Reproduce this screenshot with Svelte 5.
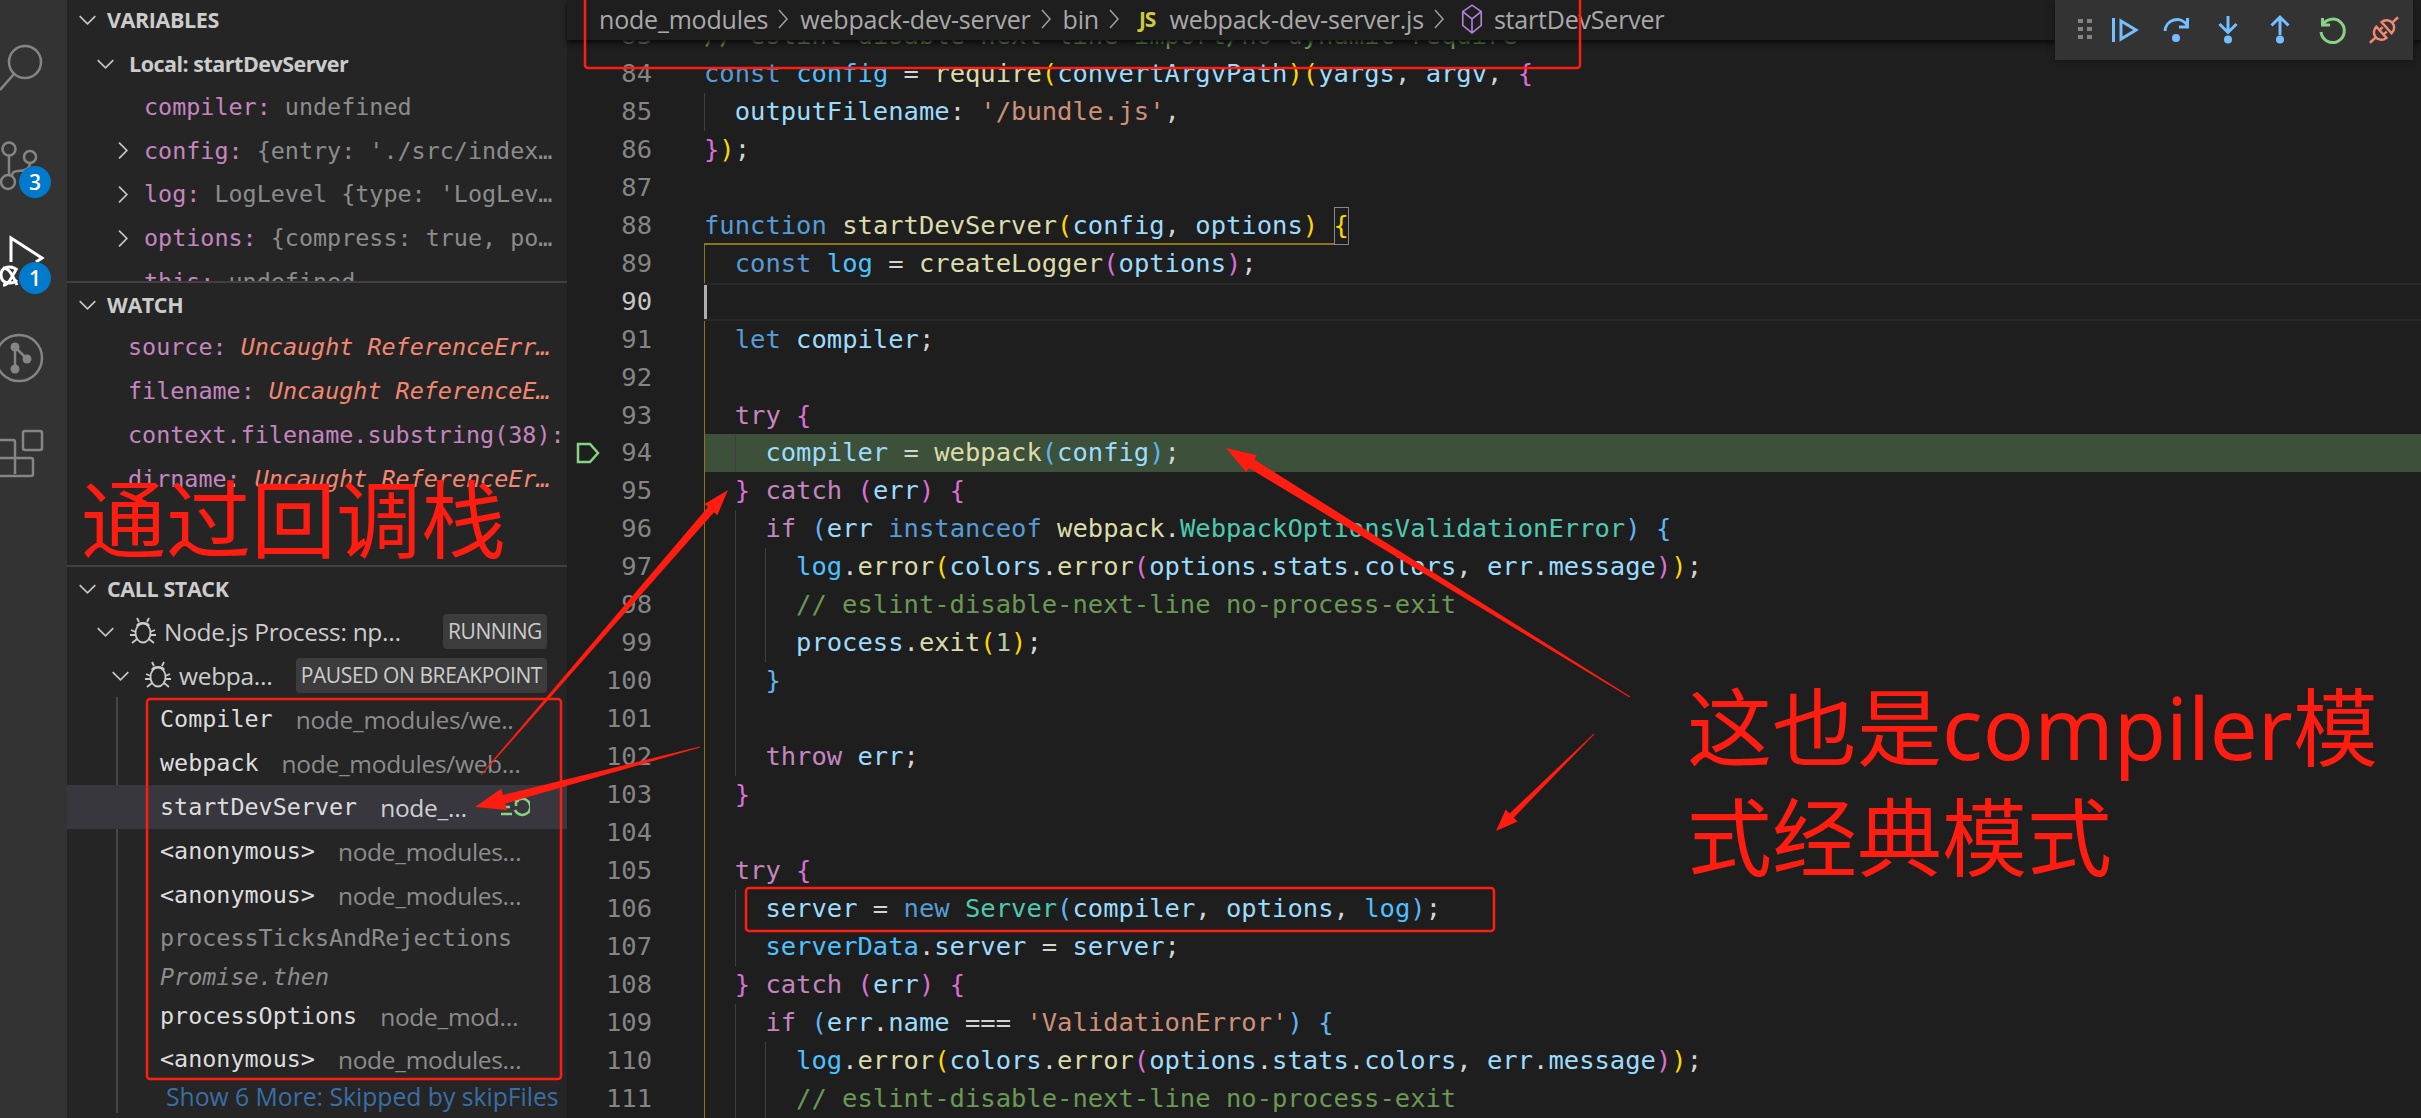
<script>
  // colour classes: k keyword, c control, v variable, o const, f function, s string,
  // t type, m comment, n number, p plain, y/r/b bracket levels
  const lines = [
    { n: 83, g: 0, t: [['m', '// eslint-disable-next-line import/no-dynamic-require']] },
    { n: 84, g: 0, t: [['k', 'const '], ['o', 'config'], ['p', ' = '], ['f', 'require'], ['y', '('], ['v', 'convertArgvPath'], ['y', ')('], ['v', 'yargs'], ['p', ', '], ['v', 'argv'], ['p', ', '], ['r', '{']] },
    { n: 85, g: 1, t: [['v', 'outputFilename'], ['p', ': '], ['s', "'/bundle.js'"], ['p', ',']] },
    { n: 86, g: 0, t: [['r', '}'], ['y', ')'], ['p', ';']] },
    { n: 87, g: 0, t: [] },
    { n: 88, g: 0, t: [['k', 'function '], ['f', 'startDevServer'], ['y', '('], ['v', 'config'], ['p', ', '], ['v', 'options'], ['y', ')'], ['p', ' '], ['y box', '{']], rule: true },
    { n: 89, g: 1, t: [['k', 'const '], ['o', 'log'], ['p', ' = '], ['f', 'createLogger'], ['r', '('], ['v', 'options'], ['r', ')'], ['p', ';']] },
    { n: 90, g: 1, t: [], active: true },
    { n: 91, g: 1, t: [['k', 'let '], ['v', 'compiler'], ['p', ';']] },
    { n: 92, g: 1, t: [] },
    { n: 93, g: 1, t: [['c', 'try '], ['r', '{']] },
    { n: 94, g: 2, t: [['v', 'compiler'], ['p', ' = '], ['f', 'webpack'], ['b', '('], ['v', 'config'], ['b', ')'], ['p', ';']], paused: true },
    { n: 95, g: 1, t: [['r', '}'], ['p', ' '], ['c', 'catch '], ['r', '('], ['v', 'err'], ['r', ')'], ['p', ' '], ['r', '{']] },
    { n: 96, g: 2, t: [['c', 'if '], ['b', '('], ['v', 'err '], ['k', 'instanceof '], ['f', 'webpack'], ['p', '.'], ['t', 'WebpackOptionsValidationError'], ['b', ')'], ['p', ' '], ['b', '{']] },
    { n: 97, g: 3, t: [['o', 'log'], ['p', '.'], ['f', 'error'], ['y', '('], ['v', 'colors'], ['p', '.'], ['f', 'error'], ['r', '('], ['v', 'options'], ['p', '.'], ['v', 'stats'], ['p', '.'], ['v', 'colors'], ['p', ', '], ['v', 'err'], ['p', '.'], ['v', 'message'], ['r', ')'], ['y', ')'], ['p', ';']] },
    { n: 98, g: 3, t: [['m', '// eslint-disable-next-line no-process-exit']] },
    { n: 99, g: 3, t: [['v', 'process'], ['p', '.'], ['f', 'exit'], ['y', '('], ['n', '1'], ['y', ')'], ['p', ';']] },
    { n: 100, g: 2, t: [['b', '}']] },
    { n: 101, g: 2, t: [] },
    { n: 102, g: 2, t: [['c', 'throw '], ['v', 'err'], ['p', ';']] },
    { n: 103, g: 1, t: [['r', '}']] },
    { n: 104, g: 1, t: [] },
    { n: 105, g: 1, t: [['c', 'try '], ['r', '{']] },
    { n: 106, g: 2, t: [['v', 'server'], ['p', ' = '], ['k', 'new '], ['t', 'Server'], ['b', '('], ['v', 'compiler'], ['p', ', '], ['v', 'options'], ['p', ', '], ['o', 'log'], ['b', ')'], ['p', ';']] },
    { n: 107, g: 2, t: [['o', 'serverData'], ['p', '.'], ['v', 'server'], ['p', ' = '], ['v', 'server'], ['p', ';']] },
    { n: 108, g: 1, t: [['r', '}'], ['p', ' '], ['c', 'catch '], ['r', '('], ['v', 'err'], ['r', ')'], ['p', ' '], ['r', '{']] },
    { n: 109, g: 2, t: [['c', 'if '], ['b', '('], ['v', 'err'], ['p', '.'], ['v', 'name'], ['p', ' === '], ['s', "'ValidationError'"], ['b', ')'], ['p', ' '], ['b', '{']] },
    { n: 110, g: 3, t: [['o', 'log'], ['p', '.'], ['f', 'error'], ['y', '('], ['v', 'colors'], ['p', '.'], ['f', 'error'], ['r', '('], ['v', 'options'], ['p', '.'], ['v', 'stats'], ['p', '.'], ['v', 'colors'], ['p', ', '], ['v', 'err'], ['p', '.'], ['v', 'message'], ['r', ')'], ['y', ')'], ['p', ';']] },
    { n: 111, g: 3, t: [['m', '// eslint-disable-next-line no-process-exit']] }
  ];

  const variables = [
    { name: 'compiler', value: 'undefined' },
    { name: 'config', value: "{entry: './src/index…", more: true },
    { name: 'log', value: "LogLevel {type: 'LogLev…", more: true },
    { name: 'options', value: '{compress: true, po…', more: true },
    { name: 'this', value: 'undefined' }
  ];

  const watches = [
    { name: 'source', value: 'Uncaught ReferenceErr…' },
    { name: 'filename', value: 'Uncaught ReferenceE…' },
    { name: 'context.filename.substring(38)', value: '' },
    { name: 'dirname', value: 'Uncaught ReferenceEr…' }
  ];

  const frames = [
    { name: 'Compiler', file: 'node_modules/we..' },
    { name: 'webpack', file: 'node_modules/web…' },
    { name: 'startDevServer', file: 'node_…', current: true },
    { name: '<anonymous>', file: 'node_modules…' },
    { name: '<anonymous>', file: 'node_modules…' },
    { name: 'processTicksAndRejections', file: '', dim: true, tall: 42 },
    { name: 'Promise.then', file: '', label: true },
    { name: 'processOptions', file: 'node_mod…', tall: 42 },
    { name: '<anonymous>', file: 'node_modules…' }
  ];

  // tapered annotation arrow: thin tail, wider neck, barbed head
  function arrow(x1, y1, x2, y2, tail, neck, head, len) {
    const d = Math.hypot(x2 - x1, y2 - y1);
    const ux = (x2 - x1) / d, uy = (y2 - y1) / d;
    const nx = -uy, ny = ux;
    const bx = x2 - ux * len, by = y2 - uy * len;
    const pt = (x, y, w) => `${x + nx * w},${y + ny * w}`;
    return [
      pt(x1, y1, tail / 2), pt(bx, by, neck / 2), pt(bx, by, head / 2), `${x2},${y2}`,
      pt(bx, by, -head / 2), pt(bx, by, -neck / 2), pt(x1, y1, -tail / 2)
    ].join(' ');
  }

  const arrows = [
    arrow(481, 775, 728, 490, 1, 8, 17, 26),
    arrow(700, 747, 475, 807, 1, 9, 22, 30),
    arrow(1630, 697, 1226, 448, 1, 10, 20, 30),
    arrow(1594, 734, 1496, 831, 1, 6, 17, 22)
  ];
</script>

{#snippet chevron(open)}
  <svg class="chev" viewBox="0 0 22 22">
    {#if open}
      <path d="M2 7l9 9 9-9" />
    {:else}
      <path d="M7 2l9 9-9 9" />
    {/if}
  </svg>
{/snippet}

{#snippet bug()}
  <svg class="bug" viewBox="0 0 26 28">
    <ellipse cx="13" cy="16" rx="7.500" ry="9.500" />
    <path d="M7 9c1-4 11-4 12 0M9 5L7 1M17 5l2-4M1 13l5 2M25 13l-5 2M0 18h5M26 18h-5M2 26l5-4M24 26l-5-4" />
  </svg>
{/snippet}

{#snippet sep()}
  <svg class="sep" viewBox="0 0 10 20"><path d="M1 1l8 9-8 9" /></svg>
{/snippet}

<div class="window">
  <aside class="activity">
    <svg class="activity-icons" viewBox="0 0 67 500">
      <g class="stroke">
        <circle cx="25" cy="62" r="16" />
        <path d="M14 74L0 90" />
        <circle cx="9" cy="149" r="6.500" />
        <circle cx="30" cy="157" r="6" />
        <circle cx="8" cy="182" r="7" />
        <path d="M9 156v19M30 163c0 7-6 8-12 8-4 0-6 2-6 5" />
        <circle cx="19" cy="358" r="23" />
        <path d="M15 347l12 12M15 347v22" />
        <rect x="23" y="431" width="19" height="19" rx="2" />
        <path d="M-6 440H13a2 2 0 0 1 2 2V474M-6 458H31a2 2 0 0 1 2 2V474a2 2 0 0 1-2 2H-6" />
      </g>
      <g class="dots">
        <circle cx="15" cy="347" r="4.500" />
        <circle cx="27" cy="359" r="4.500" />
        <circle cx="15" cy="369" r="4.500" />
      </g>
      <g class="stroke white">
        <path d="M11 262V238l31 20-6 4" />
        <path d="M17 270c-5-5-16-4-16 5s11 10 16 5M3 268c6 0 9 6 14 17M3 285c6 0 9-9 14-17" />
      </g>
      <circle class="badge" cx="35" cy="182" r="16" />
      <text class="badge-num" x="35" y="190">3</text>
      <circle class="badge" cx="35" cy="278" r="16" />
      <text class="badge-num" x="35" y="286">1</text>
    </svg>
  </aside>

  <section class="sidebar">
    <div class="pane variables">
      <div class="pane-head">{@render chevron(true)}<span>VARIABLES</span></div>
      <div class="row scope">{@render chevron(true)}<span>Local: startDevServer</span></div>
      {#each variables as v}
        <div class="row var">
          <span class="twist">{#if v.more}{@render chevron(false)}{/if}</span>
          <span><span class="name">{v.name}:</span><span class="value">{' ' + v.value}</span></span>
        </div>
      {/each}
    </div>

    <div class="pane watch">
      <div class="pane-head">{@render chevron(true)}<span>WATCH</span></div>
      {#each watches as w}
        <div class="row expr">
          <span><span class="name">{w.name}:</span>{#if w.value}<span class="error">{' ' + w.value}</span>{/if}</span>
        </div>
      {/each}
    </div>

    <div class="pane stack">
      <div class="pane-head">{@render chevron(true)}<span>CALL STACK</span></div>
      <div class="row session">
        {@render chevron(true)}{@render bug()}
        <span class="session-name">Node.js Process: np…</span>
        <span class="state">RUNNING</span>
      </div>
      <div class="row session thread">
        {@render chevron(true)}{@render bug()}
        <span class="session-name">webpa…</span>
        <span class="state">PAUSED ON BREAKPOINT</span>
      </div>
      <div class="frames">
        {#each frames as f}
          <div class="frame" class:current={f.current} class:tall42={f.tall === 42} class:label={f.label}>
            <span class="fn" class:dim={f.dim} class:ital={f.label}>{f.name}</span>
            {#if f.file}<span class="file">{f.file}</span>{/if}
            {#if f.current}
              <svg class="restart-frame" viewBox="0 0 30 22">
                <path d="M1 4h11M1 11h9M1 18h11" />
                <path d="M19 5h-3v5M16 6a8 8 0 1 1-1 8" />
              </svg>
            {/if}
          </div>
        {/each}
        <div class="show-more">Show 6 More: Skipped by skipFiles</div>
      </div>
    </div>
  </section>

  <main class="editor">
    <nav class="crumbs">
      <span>node_modules</span>{@render sep()}
      <span>webpack-dev-server</span>{@render sep()}
      <span>bin</span>{@render sep()}
      <b class="js">JS</b><span>webpack-dev-server.js</span>{@render sep()}
      <svg class="cube" viewBox="0 0 26 34">
        <path d="M13 2l10 7v15L13 32 3 24V9zM3 9l10 8 10-8M13 17v15" />
      </svg>
      <span>startDevServer</span>
    </nav>
    <div class="scroller">
      <div class="code">
        {#each lines as l}
          <div class="line" class:active={l.active}>
            <div class="gutter">
              <span class="glyph">
                {#if l.paused}
                  <svg viewBox="0 0 24 24"><path d="M2 3h12l8 9-8 9H2z" /></svg>
                {/if}
              </span>
              <span class="num">{l.n}</span>
            </div>
            <div class="content" class:paused={l.paused}>{#each { length: l.g } as _, i}<span class="guide" class:gold={i === 0 && l.n > 88}></span>{/each}{#each l.t as tok}<span class="tok {tok[0]}">{tok[1]}</span>{/each}{#if l.rule}<span class="rule"></span>{/if}{#if l.active}<span class="cursor"></span>{/if}</div>
          </div>
        {/each}
      </div>
    </div>
  </main>

  <div class="debug-bar">
    <svg class="grip" viewBox="0 0 14 22"><path d="M0 0h5v4H0zM9 0h5v4H9zM0 8h5v4H0zM9 8h5v4H9zM0 16h5v4H0zM9 16h5v4H9z" /></svg>
    <svg class="tool" viewBox="0 0 32 32"><path d="M5.500 4v24M13 7l15 9-15 9z" /></svg>
    <svg class="tool" viewBox="0 0 32 32"><path d="M5 17A12 12 0 0 1 27 11M27.500 4v9H19" /><circle cx="16" cy="24" r="4" /></svg>
    <svg class="tool" viewBox="0 0 32 32"><path d="M16 2v16M7.500 10l8.500 8.500L24.500 10" /><circle cx="16" cy="25.500" r="4" /></svg>
    <svg class="tool" viewBox="0 0 32 32"><path d="M16 21V4M7.500 11.500L16 3l8.500 8.500" /><circle cx="16" cy="25.500" r="4" /></svg>
    <svg class="tool restart" viewBox="0 0 32 32"><path d="M6.500 4v7H14M6.500 11A11.700 11.700 0 1 1 5 18" /></svg>
    <svg class="tool unplug" viewBox="0 0 32 32">
      <g transform="rotate(-42 16 16)"><path d="M-3 16H5M35 16H27M12.500 8.500A7.500 7.500 0 0 0 12.500 23.500ZM19.500 8.500A7.500 7.500 0 0 1 19.500 23.500ZM12.500 13H17M12.500 19H17" /></g>
    </svg>
  </div>

  <svg class="marks" viewBox="0 0 2421 1118">
    <rect x="585" y="-3" width="995" height="71" rx="3" />
    <rect x="147" y="699" width="414" height="380" rx="3" />
    <rect x="746" y="888" width="748" height="43" rx="3" />
    {#each arrows as points}
      <polygon {points} />
    {/each}
  </svg>

  <div class="note note-left">通过回调栈</div>
  <div class="note note-right">这也是compiler模<br />式经典模式</div>
</div>

<style>
  :global(body) {
    margin: 0;
    background: #1e1e1e;
  }

  .window {
    position: relative;
    display: flex;
    width: 2421px;
    height: 1118px;
    overflow: hidden;
    font-family: "Open Sans", "Noto Sans", sans-serif;
    color: #cccccc;
  }

  /* activity bar */
  .activity {
    flex: 0 0 67px;
    background: #333333;
  }
  .activity-icons {
    display: block;
    width: 67px;
    height: 500px;
    overflow: hidden;
  }
  .stroke {
    fill: none;
    stroke: #858585;
    stroke-width: 2.500;
  }
  .stroke.white {
    stroke: #ffffff;
    stroke-width: 3;
  }
  .dots {
    fill: #858585;
  }
  .badge {
    fill: #007acc;
  }
  .badge-num {
    fill: #ffffff;
    font: 600 21px "Open Sans", sans-serif;
    text-anchor: middle;
  }

  /* sidebar */
  .sidebar {
    flex: 0 0 500px;
    min-width: 0;
    background: #252526;
    display: flex;
    flex-direction: column;
  }
  .pane {
    overflow: hidden;
    border-bottom: 2px solid #404040;
    box-sizing: border-box;
  }
  .variables {
    height: 283px;
  }
  .watch {
    height: 284px;
  }
  .stack {
    flex: 1;
    border-bottom: 0;
  }
  .pane-head {
    height: 42px;
    display: flex;
    align-items: center;
    padding-left: 11px;
    gap: 10px;
    font-size: 21.500px;
    font-weight: 700;
    letter-spacing: -0.400px;
  }
  .variables .pane-head {
    height: 38px;
    margin-bottom: 3px;
  }
  .chev {
    flex: none;
    width: 19px;
    height: 19px;
    fill: none;
    stroke: #c5c5c5;
    stroke-width: 2;
  }
  .row {
    height: 44px;
    display: flex;
    align-items: center;
    white-space: pre;
    box-sizing: border-box;
  }
  .scope {
    padding-left: 29px;
    gap: 14px;
    font-size: 21.500px;
    font-weight: 700;
    letter-spacing: -0.500px;
  }
  .var {
    height: 43.800px;
    padding-left: 46px;
    font: 23.400px "DejaVu Sans Mono", monospace;
  }
  .twist {
    flex: 0 0 31px;
    display: flex;
  }
  .expr {
    padding-left: 61px;
    font: 23.400px "DejaVu Sans Mono", monospace;
  }
  .name {
    color: #c586c0;
  }
  .value {
    color: #8c8c8c;
  }
  .error {
    color: #f48771;
    font-style: italic;
  }
  .session {
    padding-left: 29px;
    font-size: 24.500px;
    color: #cccccc;
  }
  .session.thread {
    padding-left: 44px;
  }
  .bug {
    flex: none;
    width: 26px;
    height: 28px;
    margin: 0 8px 0 15px;
    fill: none;
    stroke: #cccccc;
    stroke-width: 1.800;
  }
  .session-name {
    flex: 1;
    letter-spacing: -0.300px;
  }
  .state {
    margin-right: 20px;
    padding: 0 5px;
    height: 35px;
    line-height: 35px;
    border-radius: 4px;
    background: #3c3c3c;
    font-size: 21px;
    letter-spacing: -0.400px;
  }
  .frames {
    margin-left: 49px;
    padding-left: 42px;
    border-left: 2px solid #464646;
    height: 416px;
  }
  .frame {
    position: relative;
    height: 44px;
    display: flex;
    align-items: center;
    gap: 23px;
    white-space: pre;
    font: 23.400px "DejaVu Sans Mono", monospace;
    color: #dddddd;
  }
  .frame.current::before {
    content: "";
    position: absolute;
    left: -93px;
    width: 500px;
    top: 0;
    bottom: 0;
    background: #37373d;
  }
  .frame > * {
    position: relative;
  }
  .frame.tall42 {
    height: 42px;
  }
  .frame.label {
    height: 36px;
  }
  .fn.dim {
    color: #8c8c8c;
  }
  .fn.ital {
    color: #8c8c8c;
    font-style: italic;
  }
  .file {
    font: 24.500px "Open Sans", sans-serif;
    color: #8c8c8c;
    letter-spacing: -0.300px;
  }
  .current .file {
    color: #d0d0d0;
  }
  .frame > .restart-frame {
    position: absolute;
    left: 340px;
    top: 11px;
    width: 30px;
    height: 22px;
    fill: none;
    stroke: #89d185;
    stroke-width: 2.500;
  }
  .show-more {
    height: 32px;
    line-height: 32px;
    margin-left: 6px;
    white-space: pre;
    font-size: 24.700px;
    color: #3a6ea5;
  }

  /* editor */
  .editor {
    flex: 1;
    min-width: 0;
    display: flex;
    flex-direction: column;
    background: #1e1e1e;
  }
  .crumbs {
    position: relative;
    z-index: 1;
    flex: 0 0 40px;
    display: flex;
    align-items: center;
    padding: 0 0 3px 32px;
    box-sizing: border-box;
    background: #1e1e1e;
    box-shadow: 0 3px 5px #0b0b0b;
    font-size: 25px;
    letter-spacing: -0.200px;
    color: #a9a9a9;
  }
  .sep {
    flex: none;
    width: 10px;
    height: 20px;
    margin: 0 12px 0 10px;
    fill: none;
    stroke: #a0a0a0;
    stroke-width: 1.500;
  }
  .js {
    margin: 0 14px 0 8px;
    font-size: 21px;
    letter-spacing: -1px;
    color: #cbcb41;
  }
  .cube {
    width: 24px;
    height: 34px;
    margin: 0 10px 0 4px;
    fill: none;
    stroke: #b180d7;
    stroke-width: 1.800;
  }
  .scroller {
    flex: 1;
    overflow: hidden;
  }
  .code {
    margin-top: -23px;
    font: 25.500px/37.960px "DejaVu Sans Mono", monospace;
  }
  .line {
    display: flex;
    height: 37.960px;
    white-space: pre;
  }
  .gutter {
    flex: 0 0 137px;
    display: flex;
    align-items: center;
    box-sizing: border-box;
    padding: 0 52px 0 9px;
    color: #858585;
  }
  .glyph {
    flex: 0 0 24px;
    height: 24px;
  }
  .glyph svg {
    display: block;
    width: 24px;
    height: 24px;
    fill: none;
    stroke: #89d185;
    stroke-width: 2.500;
  }
  .num {
    flex: 1;
    text-align: right;
  }
  .active .num {
    color: #c6c6c6;
  }
  .content {
    position: relative;
    flex: 1;
    min-width: 0;
    display: flex;
    box-sizing: border-box;
    color: #d4d4d4;
  }
  .active .content {
    border-top: 2px solid #282828;
    border-bottom: 2px solid #282828;
  }
  .content.paused {
    background: #3d5039;
  }
  .guide {
    flex: 0 0 30.700px;
    box-sizing: border-box;
    border-left: 1.500px solid #404040;
  }
  .guide.gold {
    border-left-color: #8c7417;
  }
  .rule {
    position: absolute;
    left: 0;
    bottom: 0;
    width: 630px;
    height: 2px;
    background: #8c7417;
  }
  .cursor {
    position: absolute;
    left: 0;
    top: 0;
    bottom: 0;
    width: 3px;
    background: #aeafad;
  }
  .tok.k { color: #569cd6; }
  .tok.c { color: #c586c0; }
  .tok.v { color: #9cdcfe; }
  .tok.o { color: #4fc1ff; }
  .tok.f { color: #dcdcaa; }
  .tok.s { color: #ce9178; }
  .tok.t { color: #4ec9b0; }
  .tok.m { color: #6a9955; }
  .tok.n { color: #b5cea8; }
  .tok.p { color: #d4d4d4; }
  .tok.y { color: #ffd700; }
  .tok.r { color: #da70d6; }
  .tok.b { color: #60b4f5; }
  .tok.box {
    outline: 1.500px solid #888888;
    outline-offset: -1.500px;
  }

  /* debug toolbar */
  .debug-bar {
    position: absolute;
    z-index: 2;
    left: 2055px;
    top: 0;
    width: 358px;
    height: 60px;
    box-sizing: border-box;
    padding-left: 23px;
    display: flex;
    align-items: center;
    gap: 20px;
    background: #333333;
    box-shadow: 0 0 6px #111111;
  }
  .grip {
    width: 14px;
    height: 22px;
    margin-right: -4px;
    fill: #858585;
  }
  .tool {
    width: 32px;
    height: 32px;
    fill: none;
    stroke: #75beff;
    stroke-width: 3;
    overflow: visible;
  }
  .tool circle {
    fill: #75beff;
    stroke: none;
  }
  .tool.restart {
    stroke: #89d185;
  }
  .tool.unplug {
    stroke: #f48771;
    stroke-width: 2.500;
  }

  /* red annotations */
  .marks {
    position: absolute;
    z-index: 3;
    left: 0;
    top: 0;
    width: 2421px;
    height: 1118px;
    pointer-events: none;
  }
  .marks rect {
    fill: none;
    stroke: #ff1c10;
    stroke-width: 2.500;
  }
  .marks polygon {
    fill: #ff1c10;
  }
  .note {
    position: absolute;
    z-index: 3;
    font-family: "Noto Sans", "Noto Sans CJK SC", sans-serif;
    font-size: 85px;
    line-height: 110px;
    color: #ff1c10;
    white-space: nowrap;
  }
  .note-left {
    left: 81px;
    top: 464px;
  }
  .note-right {
    left: 1687px;
    top: 672px;
  }
</style>
